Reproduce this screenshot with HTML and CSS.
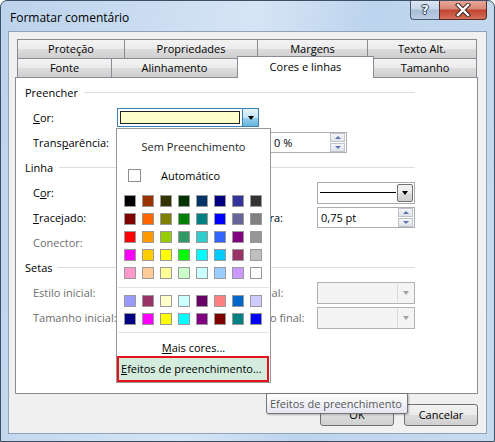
FILE: index.html
```html
<!DOCTYPE html>
<html>
<head>
<meta charset="utf-8">
<link rel="stylesheet" href="styles.css">
</head>
<body>
<div class="window">
  <div class="titlebar">
    <span class="title">Formatar comentário</span>
    <div class="caption-btns">
      <div class="cbtn help"><span class="qmark">?</span></div>
      <div class="cbtn close">
        <svg width="16" height="14" viewBox="0 0 16 14">
          <path d="M3 2 L13 12 M13 2 L3 12" stroke="#3b2220" stroke-width="4.4" stroke-linecap="square" fill="none"/>
          <path d="M3 2 L13 12 M13 2 L3 12" stroke="#ffffff" stroke-width="2.4" stroke-linecap="square" fill="none"/>
        </svg>
      </div>
    </div>
  </div>
  <div class="client">
    <div class="tabs">
      <div class="tabrow">
        <div class="tab w-prot">Proteção</div>
        <div class="tab w-prop">Propriedades</div>
        <div class="tab w-marg">Margens</div>
        <div class="tab w-alt">Texto Alt.</div>
      </div>
      <div class="tabrow">
        <div class="tab w-fonte">Fonte</div>
        <div class="tab w-alin">Alinhamento</div>
        <div class="tab selected w-cores">Cores e linhas</div>
        <div class="tab w-tam">Tamanho</div>
      </div>
    </div>
    <div class="panel">
      <div class="section"><span>Preencher</span><div class="rule"></div></div>
      <div class="field">
        <span></span>
        <span class="label"><u>C</u>or:</span>
        <div class="colorcombo">
          <div class="cc-box"><div class="cc-fill"></div></div>
          <div class="cc-btn"><span class="tri"></span></div>
        </div>
      </div>
      <div class="field trans">
        <span></span>
        <span class="label">Trans<u>p</u>arência:</span>
        <div class="slider"></div>
        <div class="spin w77"><span class="spin-val">0 %</span><div class="spin-btns"><div class="sb up"><span class="tri-up"></span></div><div class="sb down"><span class="tri-dn"></span></div></div></div>
      </div>
      <div class="section"><span>Linha</span><div class="rule"></div></div>
      <div class="field">
        <span></span>
        <span class="label">C<u>o</u>r:</span>
        <span></span>
        <span class="rlabel"><u>E</u>stilo:</span>
        <div class="combo linecombo"><div class="lc-line"></div><div class="combo-btn"><span class="tri"></span></div></div>
      </div>
      <div class="field">
        <span></span>
        <span class="label"><u>T</u>racejado:</span>
        <span></span>
        <span class="rlabel">E<u>s</u>pessura:</span>
        <div class="spin"><span class="spin-val">0,75 pt</span><div class="spin-btns"><div class="sb up"><span class="tri-up"></span></div><div class="sb down"><span class="tri-dn"></span></div></div></div>
      </div>
      <div class="field">
        <span></span>
        <span class="label dis">Conector:</span>
      </div>
      <div class="section"><span>Setas</span><div class="rule"></div></div>
      <div class="field">
        <span></span>
        <span class="label dis">Estilo inicial:</span>
        <span></span>
        <span class="rlabel dis">Estilo final:</span>
        <div class="combo discombo"><div class="combo-btn dis-btn"><span class="tri gray"></span></div></div>
      </div>
      <div class="field">
        <span></span>
        <span class="label dis">Tamanho inicial:</span>
        <span></span>
        <span class="rlabel dis">Tamanho final:</span>
        <div class="combo discombo"><div class="combo-btn dis-btn"><span class="tri gray"></span></div></div>
      </div>
    </div>
    <div class="buttons">
      <div class="btn">OK</div>
      <div class="btn">Cancelar</div>
    </div>
  </div>

  <div class="popup">
    <div class="pop-none">Sem Preenchimento</div>
    <div class="pop-auto"><span class="chk"></span><span>Automático</span></div>
    <div class="swatches">
      <span class="sw" style="background:#000000"></span>
      <span class="sw" style="background:#993300"></span>
      <span class="sw" style="background:#333300"></span>
      <span class="sw" style="background:#003300"></span>
      <span class="sw" style="background:#003366"></span>
      <span class="sw" style="background:#000080"></span>
      <span class="sw" style="background:#333399"></span>
      <span class="sw" style="background:#333333"></span>
      <span class="sw" style="background:#800000"></span>
      <span class="sw" style="background:#ff6600"></span>
      <span class="sw" style="background:#808000"></span>
      <span class="sw" style="background:#008000"></span>
      <span class="sw" style="background:#008080"></span>
      <span class="sw" style="background:#0000ff"></span>
      <span class="sw" style="background:#666699"></span>
      <span class="sw" style="background:#808080"></span>
      <span class="sw" style="background:#ff0000"></span>
      <span class="sw" style="background:#ff9900"></span>
      <span class="sw" style="background:#99cc00"></span>
      <span class="sw" style="background:#339966"></span>
      <span class="sw" style="background:#33cccc"></span>
      <span class="sw" style="background:#3366ff"></span>
      <span class="sw" style="background:#800080"></span>
      <span class="sw" style="background:#969696"></span>
      <span class="sw" style="background:#ff00ff"></span>
      <span class="sw" style="background:#ffcc00"></span>
      <span class="sw" style="background:#ffff00"></span>
      <span class="sw" style="background:#00ff00"></span>
      <span class="sw" style="background:#00ffff"></span>
      <span class="sw" style="background:#00ccff"></span>
      <span class="sw" style="background:#993366"></span>
      <span class="sw" style="background:#c0c0c0"></span>
      <span class="sw" style="background:#ff99cc"></span>
      <span class="sw" style="background:#ffcc99"></span>
      <span class="sw" style="background:#ffff99"></span>
      <span class="sw" style="background:#ccffcc"></span>
      <span class="sw" style="background:#ccffff"></span>
      <span class="sw" style="background:#99ccff"></span>
      <span class="sw" style="background:#cc99ff"></span>
      <span class="sw" style="background:#ffffff"></span>
    </div>
    <div class="pop-sep"></div>
    <div class="swatches two">
      <span class="sw" style="background:#9999ff"></span>
      <span class="sw" style="background:#993366"></span>
      <span class="sw" style="background:#ffffcc"></span>
      <span class="sw" style="background:#ccffff"></span>
      <span class="sw" style="background:#660066"></span>
      <span class="sw" style="background:#ff8080"></span>
      <span class="sw" style="background:#0066cc"></span>
      <span class="sw" style="background:#ccccff"></span>
      <span class="sw" style="background:#000080"></span>
      <span class="sw" style="background:#ff00ff"></span>
      <span class="sw" style="background:#ffff00"></span>
      <span class="sw" style="background:#00ffff"></span>
      <span class="sw" style="background:#800080"></span>
      <span class="sw" style="background:#800000"></span>
      <span class="sw" style="background:#008080"></span>
      <span class="sw" style="background:#0000ff"></span>
    </div>
    <div class="pop-sep"></div>
    <div class="pop-more"><u>M</u>ais cores...</div>
    <div class="pop-fx"><u>E</u>feitos de preenchimento...</div>
  </div>

  <div class="tooltip">Efeitos de preenchimento</div>
</div>
</body>
</html>
```
FILE: styles.css
```css
* { box-sizing: border-box; }
html, body { margin: 0; padding: 0; background: #ffffff; }
body {
  font-family: "Open Sans", "Noto Sans", sans-serif;
  font-size: 11px;
  line-height: 15px;
  color: #000;
}
u { text-decoration: underline; text-underline-offset: 1px; }

.window {
  position: relative;
  width: 495px;
  height: 442px;
  border: 1px solid #3d4f63;
  border-radius: 7px 7px 0 0;
  background: linear-gradient(100deg, #bcd3ec 0%, #c9dcf1 25%, #d6e5f5 45%, #bdd4ee 65%, #c7dbf0 100%);
  display: flex;
  flex-direction: column;
  overflow: hidden;
}

.titlebar {
  height: 30px;
  display: flex;
  align-items: flex-start;
  flex: none;
}
.title {
  padding: 9px 0 0 9px;
  font-size: 12px;
  color: #000;
}
.caption-btns {
  margin-left: auto;
  margin-right: 7px;
  margin-top: -1px;
  display: flex;
}
.cbtn {
  height: 20px;
  display: flex;
  align-items: center;
  justify-content: center;
  border: 1px solid #4b5b6e;
  border-top: none;
}
.help {
  width: 29px;
  border-radius: 0 0 0 4px;
  border-right: none;
  background: linear-gradient(#dfe8f3 0%, #c7d7ea 45%, #a9bfd8 55%, #bccde2 100%);
}
.qmark {
  font-family: "DejaVu Sans", sans-serif;
  font-weight: bold;
  font-size: 13px;
  color: #f4f7fb;
  text-shadow: 1px 0 0 #2f3e4f, -1px 0 0 #2f3e4f, 0 1px 0 #2f3e4f, 0 -1px 0 #2f3e4f;
  line-height: 14px;
}
.close {
  width: 48px;
  border-radius: 0 0 4px 0;
  border-color: #5b2b26;
  background: linear-gradient(#e9a99b 0%, #d88a78 45%, #c24431 55%, #d4715a 100%);
}

.client {
  flex: 1;
  margin: 0 7px 7px 7px;
  background: #f0f0f0;
  border: 1px solid #8ea2b8;
  padding: 7px 8px 0 6px;
}

.tabs { margin-left: 2px; }
.tabrow { display: flex; height: 19px; }
.tab {
  height: 19px;
  border: 1px solid #898c95;
  border-bottom: none;
  background: linear-gradient(#f3f3f3 0%, #ebebeb 50%, #dddddd 51%, #cfcfcf 100%);
  text-align: center;
  line-height: 18px;
  margin-left: -1px;
}
.tab:first-child { margin-left: 0; }
.w-prot { width: 108px; }
.w-prop { width: 134px; }
.w-marg { width: 111px; }
.w-alt { width: 110px; }
.w-fonte { width: 95px; }
.w-alin { width: 127px; }
.w-cores { width: 137px; }
.w-tam { width: 104px; }
.tab.selected {
  position: relative;
  z-index: 2;
  background: #ffffff;
  height: 22px;
  margin-top: -2px;
  line-height: 19px;
}

.panel {
  width: 463px;
  height: 317px;
  background: #ffffff;
  border: 1px solid #898c95;
  padding: 2px 62px 0 9px;
}

.section {
  height: 25px;
  display: flex;
  align-items: center;
}
.rule {
  flex: 1;
  height: 1px;
  background: #d5dfe5;
  margin-left: 6px;
}

.field {
  height: 25px;
  display: grid;
  grid-template-columns: 8px 84px 111px 89px 98px;
  align-items: center;
}
.field.trans {
  grid-template-columns: 8px 84px 153px 77px;
}
.dis { color: #6d6d6d; }

.colorcombo {
  display: flex;
  width: 142px;
  height: 19px;
}
.cc-box {
  width: 126px;
  height: 19px;
  border: 1px solid #3c7fb1;
  padding: 2px;
  background: #ffffff;
}
.cc-fill {
  height: 100%;
  background: #ffffcc;
  border: 1px solid #222;
}
.cc-btn {
  width: 16px;
  height: 19px;
  border: 1px solid #3c7fb1;
  border-left: none;
  background: linear-gradient(#e5f4fc 0%, #c4e5f6 50%, #98d1ef 51%, #68b3db 100%);
  display: flex;
  align-items: center;
  justify-content: center;
}
.tri {
  width: 0; height: 0;
  border-left: 3.5px solid transparent;
  border-right: 3.5px solid transparent;
  border-top: 4px solid #000;
}
.tri.gray { border-top-color: #a0a0a0; }

.spin {
  width: 98px;
  height: 21px;
  border: 1px solid #abadb3;
  background: #fff;
  display: flex;
  align-items: center;
  justify-content: space-between;
}
.spin.w77 { width: 77px; }
.spin-val { padding-left: 3px; }
.spin-btns {
  display: flex;
  flex-direction: column;
  width: 15px;
  height: 19px;
  margin-right: 1px;
  gap: 1px;
}
.sb {
  flex: 1;
  border: 1px solid #c0c3c9;
  background: linear-gradient(#f4f5f7, #dfe3ea);
  display: flex;
  align-items: center;
  justify-content: center;
}
.tri-up {
  width: 0; height: 0;
  border-left: 3.5px solid transparent;
  border-right: 3.5px solid transparent;
  border-bottom: 3px solid #5874b6;
}
.tri-dn {
  width: 0; height: 0;
  border-left: 3.5px solid transparent;
  border-right: 3.5px solid transparent;
  border-top: 3px solid #5874b6;
}

.combo {
  width: 98px;
  height: 22px;
  border: 1px solid #acacac;
  display: flex;
  align-items: center;
  justify-content: flex-end;
  background: #fff;
  padding: 1px;
}
.linecombo { justify-content: space-between; padding-left: 2px; }
.lc-line { flex: 1; height: 1px; background: #000; margin-right: 1px; }
.combo-btn {
  width: 16px;
  height: 18px;
  border: 1px solid #707070;
  border-radius: 2px;
  background: linear-gradient(#f2f2f2 0%, #ebebeb 50%, #dddddd 51%, #cfcfcf 100%);
  display: flex;
  align-items: center;
  justify-content: center;
}
.discombo { background: #f4f4f4; border-color: #adb2b5; }
.dis-btn { border-color: #d9d9d9; background: #f4f4f4; border-top: none; border-bottom: none; border-right: none; border-radius: 0; }

.buttons {
  display: flex;
  justify-content: flex-end;
  gap: 10px;
  margin-top: 10px;
}
.btn {
  width: 74px;
  height: 22px;
  border: 1px solid #707070;
  border-radius: 3px;
  background: linear-gradient(#f2f2f2 0%, #ebebeb 50%, #dddddd 51%, #cfcfcf 100%);
  text-align: center;
  line-height: 20px;
}

/* dropdown popup */
.popup {
  position: absolute;
  left: 115px;
  top: 127px;
  width: 155px;
  height: 255px;
  background: #ffffff;
  border: 1px solid #979797;
  z-index: 5;
}
.pop-none {
  height: 36px;
  line-height: 36px;
  text-align: center;
  color: #1e1e1e;
}
.pop-auto {
  height: 21px;
  display: flex;
  align-items: center;
  padding-left: 11px;
}
.chk {
  width: 13px;
  height: 13px;
  border: 1px solid #8e8f8f;
  background: #fff;
  margin-right: 20px;
}
.swatches {
  display: grid;
  grid-template-columns: repeat(8, 12px);
  grid-auto-rows: 12px;
  gap: 6px;
  margin: 9px 0 0 7px;
}
.swatches.two { margin-top: 7px; }
.sw { border: 1px solid #9a9a9a; }
.pop-sep {
  height: 1px;
  background: #e3e3e3;
  margin: 8px 1px 0 1px;
}
.swatches.two + .pop-sep { margin-top: 7px; }
.pop-more {
  height: 23px;
  padding-top: 7px;
  text-align: center;
}
.pop-fx {
  height: 26px;
  margin-right: 1px;
  border: 2px solid #e5121e;
  background: #d3ecdd;
  padding-left: 2px;
  line-height: 21px;
  white-space: nowrap;
}

.tooltip {
  position: absolute;
  left: 265px;
  top: 392px;
  width: 142px;
  height: 21px;
  border: 1px solid #767676;
  border-radius: 2px;
  background: linear-gradient(#ffffff, #e4e5f0);
  color: #575757;
  padding-left: 3px;
  line-height: 19px;
  z-index: 6;
  box-shadow: 1px 1px 2px rgba(0,0,0,0.25);
}
```
